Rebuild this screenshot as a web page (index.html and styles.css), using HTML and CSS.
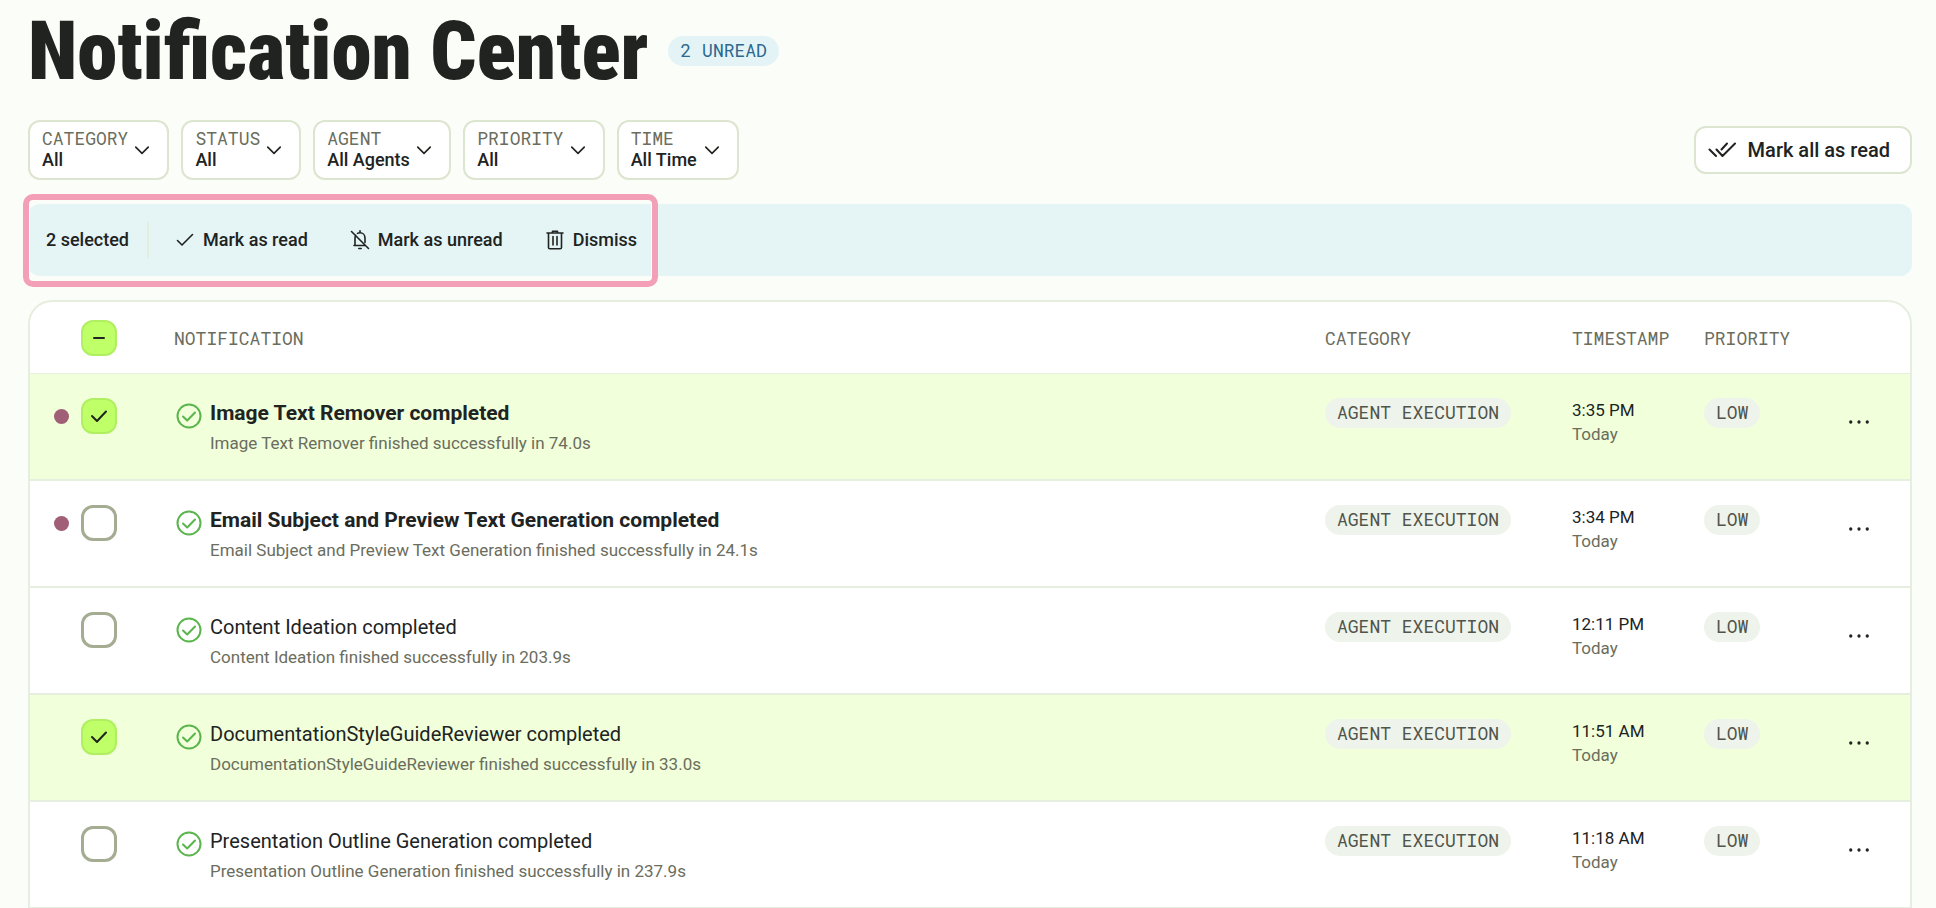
FILE: index.html
```html
<!DOCTYPE html>
<html lang="en">
<head>
    <meta charset="UTF-8">
    <meta name="viewport" content="width=device-width,initial-scale=1">
    <title>Notification Center</title>
    <link rel="stylesheet" href="styles.css">
</head>
<body>
    <!-- shared icons -->
    <svg class="sprite" aria-hidden="true">
        <symbol id="i-chevron" viewBox="0 0 24 24"><path d="M4.5 8.5 12 16 19.5 8.5"/></symbol>
        <symbol id="i-check" viewBox="0 0 20 20"><path d="M2.5 10.5 7 15 17.5 4.5"/></symbol>
        <symbol id="i-tick" viewBox="0 0 36 36"><path d="M11 18 16 23 25 13.5"/></symbol>
        <symbol id="i-minus" viewBox="0 0 36 36"><path d="M13 18H23"/></symbol>
        <symbol id="i-done" viewBox="0 0 30 30"><circle cx="15" cy="15" r="11.5"/><path d="M9 15.5 13.2 19.5 21 11.5"/></symbol>
        <symbol id="i-more" viewBox="0 0 24 24"><circle cx="3" cy="12" r="1.8"/><circle cx="12" cy="12" r="1.8"/><circle cx="21" cy="12" r="1.8"/></symbol>
    </svg>

    <main class="page">
        <header class="head">
            <h1>Notification Center</h1>
            <span class="pill pill-blue">2 UNREAD</span>
        </header>

        <div class="toolbar">
            <div class="filters">
                <label class="filter">
                    <span class="filter-text"><span class="mono">CATEGORY</span><select><option>All</option></select></span>
                    <svg class="icon"><use href="#i-chevron"/></svg>
                </label>
                <label class="filter">
                    <span class="filter-text"><span class="mono">STATUS</span><select><option>All</option></select></span>
                    <svg class="icon"><use href="#i-chevron"/></svg>
                </label>
                <label class="filter">
                    <span class="filter-text"><span class="mono">AGENT</span><select><option>All Agents</option></select></span>
                    <svg class="icon"><use href="#i-chevron"/></svg>
                </label>
                <label class="filter">
                    <span class="filter-text"><span class="mono">PRIORITY</span><select><option>All</option></select></span>
                    <svg class="icon"><use href="#i-chevron"/></svg>
                </label>
                <label class="filter">
                    <span class="filter-text"><span class="mono">TIME</span><select><option>All Time</option></select></span>
                    <svg class="icon"><use href="#i-chevron"/></svg>
                </label>
            </div>
            <button class="mark-all" type="button">
                <svg class="icon" viewBox="0 0 28 24"><path d="M1.5 11.5 8 18M8.5 11.5 14.5 18 27 5.5M13.5 11.5 19 5.5"/></svg>
                Mark all as read
            </button>
        </div>

        <section class="bulk">
            <div class="bulk-inner">
                <span class="count">2 selected</span>
                <button type="button">
                    <svg class="icon"><use href="#i-check"/></svg>
                    Mark as read
                </button>
                <button type="button">
                    <svg class="icon" viewBox="0 0 20 20"><path d="M1.5 1.5 18.5 18.5M4 15.5H15.5M5 15.5V8C5 7 5.3 6 5.8 5.3M7.5 3.4C8.2 3 9 2.8 10 2.8 12.8 2.8 15 5 15 8V12.5M10 2.8V.8M8.8 18.5H11.2"/></svg>
                    Mark as unread
                </button>
                <button type="button">
                    <svg class="icon" viewBox="0 0 20 20"><path d="M2 3H18M7.5 3V1.2H12.5V3M3.5 3V17.5Q3.5 18.8 4.8 18.8H15.2Q16.5 18.8 16.5 17.5V3M8 6.5V15M12 6.5V15"/></svg>
                    Dismiss
                </button>
            </div>
        </section>

        <div class="table-wrap">
            <table>
                <colgroup>
                    <col class="c-check"><col><col class="c-cat"><col class="c-time"><col class="c-prio"><col class="c-more">
                </colgroup>
                <thead>
                    <tr>
                        <th>
                            <div class="select">
                                <i class="dot"></i>
                                <span class="box"><input type="checkbox" checked aria-label="Select all"><svg><use href="#i-minus"/></svg></span>
                            </div>
                        </th>
                        <th>NOTIFICATION</th>
                        <th>CATEGORY</th>
                        <th>TIMESTAMP</th>
                        <th>PRIORITY</th>
                        <th></th>
                    </tr>
                </thead>
                <tbody>
                    <tr class="selected unread">
                        <td><div class="select"><i class="dot"></i><span class="box"><input type="checkbox" checked aria-label="Select row"><svg><use href="#i-tick"/></svg></span></div></td>
                        <td>
                            <div class="note">
                                <svg class="done"><use href="#i-done"/></svg>
                                <div><p class="title">Image Text Remover completed</p><p class="sub">Image Text Remover finished successfully in 74.0s</p></div>
                            </div>
                        </td>
                        <td><span class="pill">AGENT EXECUTION</span></td>
                        <td><p class="time">3:35 PM</p><p class="day">Today</p></td>
                        <td><span class="pill">LOW</span></td>
                        <td><button class="more" type="button" aria-label="More"><svg><use href="#i-more"/></svg></button></td>
                    </tr>
                    <tr class="unread">
                        <td><div class="select"><i class="dot"></i><span class="box"><input type="checkbox" aria-label="Select row"><svg><use href="#i-tick"/></svg></span></div></td>
                        <td>
                            <div class="note">
                                <svg class="done"><use href="#i-done"/></svg>
                                <div><p class="title">Email Subject and Preview Text Generation completed</p><p class="sub">Email Subject and Preview Text Generation finished successfully in 24.1s</p></div>
                            </div>
                        </td>
                        <td><span class="pill">AGENT EXECUTION</span></td>
                        <td><p class="time">3:34 PM</p><p class="day">Today</p></td>
                        <td><span class="pill">LOW</span></td>
                        <td><button class="more" type="button" aria-label="More"><svg><use href="#i-more"/></svg></button></td>
                    </tr>
                    <tr>
                        <td><div class="select"><i class="dot"></i><span class="box"><input type="checkbox" aria-label="Select row"><svg><use href="#i-tick"/></svg></span></div></td>
                        <td>
                            <div class="note">
                                <svg class="done"><use href="#i-done"/></svg>
                                <div><p class="title">Content Ideation completed</p><p class="sub">Content Ideation finished successfully in 203.9s</p></div>
                            </div>
                        </td>
                        <td><span class="pill">AGENT EXECUTION</span></td>
                        <td><p class="time">12:11 PM</p><p class="day">Today</p></td>
                        <td><span class="pill">LOW</span></td>
                        <td><button class="more" type="button" aria-label="More"><svg><use href="#i-more"/></svg></button></td>
                    </tr>
                    <tr class="selected">
                        <td><div class="select"><i class="dot"></i><span class="box"><input type="checkbox" checked aria-label="Select row"><svg><use href="#i-tick"/></svg></span></div></td>
                        <td>
                            <div class="note">
                                <svg class="done"><use href="#i-done"/></svg>
                                <div><p class="title">DocumentationStyleGuideReviewer completed</p><p class="sub">DocumentationStyleGuideReviewer finished successfully in 33.0s</p></div>
                            </div>
                        </td>
                        <td><span class="pill">AGENT EXECUTION</span></td>
                        <td><p class="time">11:51 AM</p><p class="day">Today</p></td>
                        <td><span class="pill">LOW</span></td>
                        <td><button class="more" type="button" aria-label="More"><svg><use href="#i-more"/></svg></button></td>
                    </tr>
                    <tr>
                        <td><div class="select"><i class="dot"></i><span class="box"><input type="checkbox" aria-label="Select row"><svg><use href="#i-tick"/></svg></span></div></td>
                        <td>
                            <div class="note">
                                <svg class="done"><use href="#i-done"/></svg>
                                <div><p class="title">Presentation Outline Generation completed</p><p class="sub">Presentation Outline Generation finished successfully in 237.9s</p></div>
                            </div>
                        </td>
                        <td><span class="pill">AGENT EXECUTION</span></td>
                        <td><p class="time">11:18 AM</p><p class="day">Today</p></td>
                        <td><span class="pill">LOW</span></td>
                        <td><button class="more" type="button" aria-label="More"><svg><use href="#i-more"/></svg></button></td>
                    </tr>
                </tbody>
            </table>
        </div>
    </main>
</body>
</html>
```

FILE: styles.css
```css
/* reset */
*{
    box-sizing: border-box;
}
body{
    margin: 0;
    background: #fbfdf8;
    color: #20231f;
    font-family: Roboto, "Liberation Sans", sans-serif;
    font-size: 18px;
    line-height: 24px;
}
h1,p{
    margin: 0;
}
button,select{
    margin: 0;
    padding: 0;
    border: none;
    background: none;
    color: inherit;
    font: inherit;
    cursor: pointer;
}
svg{
    fill: none;
    stroke: currentColor;
    stroke-width: 2;
    stroke-linecap: round;
    stroke-linejoin: round;
}
.sprite{
    display: none;
}
.icon{
    flex: none;
    width: 20px;
    height: 20px;
}
.page{
    padding: 0 24px 0 28px;
}

/* heading */
.head{
    display: flex;
    align-items: center;
    gap: 20px;
    height: 102px;
}
h1{
    padding-top: 2px;
    font-family: "Roboto Condensed", "Liberation Sans Narrow", sans-serif;
    font-size: 81px;
    line-height: 96px;
    font-weight: 900;
}
.mono,.pill,th{
    font-family: "Roboto Mono", "Liberation Mono", monospace;
    font-size: 18px;
    font-weight: 400;
    color: #6b6d5d;
}
.pill{
    display: inline-block;
    padding: 0 12px 2px;
    border-radius: 15px;
    line-height: 28px;
    vertical-align: top;
    background: #eef3ec;
    color: #50554b;
    white-space: nowrap;
}
.pill-blue{
    background: #e4f4f6;
    color: #2c6890;
}

/* filters */
.toolbar{
    display: flex;
    justify-content: space-between;
    align-items: center;
    padding: 18px 0 24px;
}
.filters{
    display: flex;
    gap: 12px;
}
.filter{
    display: flex;
    align-items: center;
    gap: 4px;
    height: 60px;
    padding: 0 15px 0 12px;
    border: 2px solid #dce5cf;
    border-radius: 12px;
    background: #fff;
}
.filter-text{
    display: flex;
    flex-direction: column;
    align-items: flex-start;
    padding-bottom: 2px;
    line-height: 22px;
}
.filter select{
    appearance: none;
    height: 22px;
    font-weight: 500;
}
.mark-all{
    display: flex;
    align-items: center;
    gap: 12px;
    height: 48px;
    padding: 0 20px 0 12px;
    border: 2px solid #dce5cf;
    border-radius: 12px;
    background: #fff;
    font-size: 20px;
    font-weight: 500;
}
.mark-all .icon{
    width: 28px;
    height: 24px;
}

/* bulk actions */
.bulk{
    display: flex;
    margin-bottom: 24px;
    border-radius: 12px;
    background: #e5f4f5;
}
.bulk-inner{
    position: relative;
    display: flex;
    align-items: center;
    gap: 10px;
    height: 72px;
    padding-left: 18px;
    font-weight: 500;
}
.bulk-inner::after{
    content: "";
    position: absolute;
    inset: -10px -5px -11px;
    border: 6px solid #f39fb7;
    border-radius: 10px;
    box-shadow: inset 0 0 0 1px #fbfdf8;
    pointer-events: none;
}
.count{
    padding-right: 18px;
    border-right: 2px solid #e3efdd;
    line-height: 36px;
}
.bulk button{
    display: flex;
    align-items: center;
    gap: 8px;
    padding: 0 16px;
}
.bulk .icon{
    stroke-width: 1.6;
}

/* table */
.table-wrap{
    border: 2px solid #e6efdf;
    border-bottom: none;
    border-radius: 24px 24px 0 0;
    background: #fff;
    overflow: hidden;
}
table{
    width: 100%;
    table-layout: fixed;
    border-collapse: separate;
    border-spacing: 0;
}
.c-check{
    width: 144px;
}
.c-cat{
    width: 247px;
}
.c-time{
    width: 132px;
}
.c-prio{
    width: 120px;
}
.c-more{
    width: 86px;
}
th,td{
    padding: 0;
    text-align: left;
}
th{
    height: 72px;
    border-bottom: 1px solid #e6efdf;
}
td{
    height: 107px;
    padding-top: 24px;
    border-bottom: 2px solid #e6efdf;
    vertical-align: top;
}
.selected{
    background: #f1ffdb;
}
.select{
    display: flex;
    align-items: center;
    gap: 12px;
    padding-left: 24px;
}
.dot{
    width: 15px;
    height: 15px;
    border-radius: 50%;
}
.unread .dot{
    background: #a05e77;
}
.box{
    display: grid;
}
.box input,.box svg{
    grid-area: 1 / 1;
    width: 36px;
    height: 36px;
    margin: 0;
}
.box input{
    appearance: none;
    border: 3px solid #a4ac92;
    border-radius: 12px;
    background: #fff;
}
.box input:checked{
    border: 2px solid #b1ef62;
    background: #bfff68;
}
.box svg{
    display: none;
    color: #20231f;
    pointer-events: none;
}
.box input:checked + svg{
    display: block;
}
.note{
    display: flex;
    gap: 6px;
}
.done{
    flex: none;
    width: 30px;
    height: 36px;
    color: #5ab54c;
}
.title{
    font-size: 20px;
    line-height: 30px;
}
.unread .title{
    font-size: 21px;
    font-weight: 700;
}
.sub{
    font-size: 17px;
    line-height: 30px;
    color: #6b6d5d;
}
.time,.day{
    font-size: 17px;
}
.day{
    color: #6b6d5d;
}
.more{
    display: block;
    width: 70px;
    height: 54px;
}
.more svg{
    width: 22px;
    height: 24px;
    fill: currentColor;
    stroke: none;
}
```
